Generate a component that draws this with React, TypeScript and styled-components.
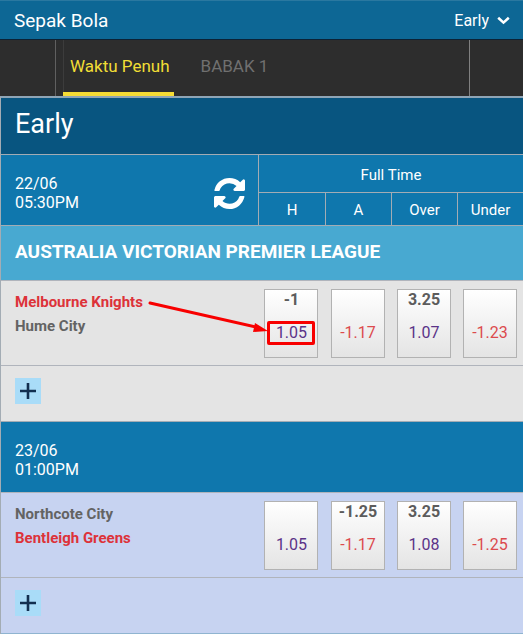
import React from "react";
import styled, { createGlobalStyle, css } from "styled-components";

const line = "#a3acb4";
const red = "#f80000";

const GlobalStyle = createGlobalStyle`
  *, *::before, *::after { box-sizing: border-box; }
  body {
    margin: 0;
    background: #c7d3f1;
    color: #ffffff;
    font-family: Roboto, "Liberation Sans", sans-serif;
    font-size: 16px;
  }
  button, select { font: inherit; color: inherit; }
`;

const TopBar = styled.header`
  display: flex;
  align-items: center;
  justify-content: space-between;
  height: 40px;
  padding: 0 13px 0 14px;
  background: #0d6795;
  border-top: 1px solid #2a78a0;
  border-bottom: 1px solid #0b2236;
`;

const SportTitle = styled.h1`
  margin: 0;
  font-size: 19px;
  font-weight: 400;
`;

const MarketPicker = styled.label`
  display: flex;
  align-items: center;
  gap: 8px;
`;

const MarketSelect = styled.select`
  appearance: none;
  field-sizing: content;
  padding: 0;
  border: 0;
  background: transparent;
  font-size: 16px;
`;

const TabStrip = styled.nav`
  display: flex;
  height: 56px;
  background: #2d2d2d;
`;

const TabEdge = styled.div<{ $side: "left" | "right" }>`
  flex: 0 0 auto;
  width: ${(p) => (p.$side === "left" ? 56 : 54)}px;
  ${(p) =>
    p.$side === "left"
      ? css`border-right: 1px solid #606060;`
      : css`border-left: 1px solid #808080;`}
`;

const TabList = styled.div`
  display: flex;
  flex: 1;
  gap: 20px;
  padding-left: 7px;
`;

const Tab = styled.button<{ $active?: boolean }>`
  padding: 0 4px 0 7px;
  border: 0;
  border-bottom: 4px solid ${(p) => (p.$active ? "#f5dc35" : "transparent")};
  background: transparent;
  box-shadow: ${(p) => (p.$active ? "inset 1px 0 #3c3c3c" : "none")};
  color: ${(p) => (p.$active ? "#f1de35" : "#707070")};
  font-size: 17px;
`;

const Board = styled.main`
  border-top: 2px solid #8fa5b6;
  border-left: 1px solid ${line};
`;

const Heading = styled.h2`
  display: flex;
  align-items: center;
  height: 56px;
  margin: 0;
  padding: 0 14px 4px;
  background: #085580;
  font-size: 27px;
  font-weight: 400;
`;

const OddsTable = styled.table`
  width: 100%;
  table-layout: fixed;
  border-collapse: separate;
  border-spacing: 0;
  text-align: center;
`;

const OddsCol = styled.col<{ $width: number }>`
  width: ${(p) => p.$width}px;
`;

const HeadCell = styled.th<{ $height: number }>`
  height: ${(p) => p.$height}px;
  padding: 2px 0 0;
  border-top: 1px solid ${line};
  border-left: 1px solid ${line};
  background: #0f77ad;
  font-size: 15px;
  font-weight: 400;
`;

const DateCell = styled.th`
  height: 71px;
  padding: 0 13px 0 14px;
  border-top: 1px solid ${line};
  background: #0f77ad;
  font-weight: 400;
  text-align: left;
`;

const DateRow = styled.div`
  display: flex;
  align-items: center;
  justify-content: space-between;
  padding-top: 6px;
`;

const Kickoff = styled.time`
  font-size: 16px;
  line-height: 19px;
  white-space: pre-line;
`;

const RefreshButton = styled.button`
  display: flex;
  padding: 0;
  border: 0;
  background: transparent;
`;

const LeagueCell = styled.th`
  height: 55px;
  padding: 0 14px 4px;
  border-top: 1px solid ${line};
  background: #48a9d1;
  font-size: 19px;
  font-weight: 700;
  text-align: left;
`;

const MatchBody = styled.tbody<{ $tint: string }>`
  background: ${(p) => p.$tint};
`;

const TeamsCell = styled.th`
  position: relative;
  height: 85px;
  padding: 9px 14px;
  border-top: 1px solid #b0b4bc;
  text-align: left;
  vertical-align: top;
`;

const Team = styled.div<{ $favourite: boolean }>`
  color: ${(p) => (p.$favourite ? "#dd3239" : "#636363")};
  font-size: 15px;
  font-weight: 700;
  line-height: 24px;
`;

const PriceCell = styled.td`
  height: 85px;
  padding: 8px 0 7px;
  border-top: 1px solid #b0b4bc;
  vertical-align: top;
`;

const PriceButton = styled.button`
  display: flex;
  flex-direction: column;
  align-items: center;
  justify-content: space-between;
  width: 54px;
  height: 69px;
  margin: 0 auto;
  padding: 1px 0 12px;
  border: 1px solid #b2b2b2;
  background: linear-gradient(#ffffff, #e4e4e4);
`;

const Handicap = styled.span`
  height: 18px;
  color: #5c5c5c;
  font-weight: 700;
  line-height: 18px;
`;

const Price = styled.span<{ $negative: boolean; $marked?: boolean }>`
  width: 48px;
  border: 3px solid ${(p) => (p.$marked ? red : "transparent")};
  border-radius: 2px;
  color: ${(p) => (p.$negative ? "#dc4a4d" : "#5b3388")};
  line-height: 18px;
`;

const MoreCell = styled.td`
  height: 56px;
  padding: 0 14px;
  border-top: 1px solid #b0b4bc;
`;

const MoreButton = styled.button`
  display: flex;
  align-items: center;
  justify-content: center;
  width: 26px;
  height: 26px;
  padding: 0;
  margin-top: -6px;
  border: 0;
  background: #a9dcf8;
`;

const Pointer = styled.svg`
  position: absolute;
  top: 16px;
  right: -10px;
  overflow: visible;
  pointer-events: none;
`;

const BottomLine = styled.div`
  height: 2px;
  background: #8fb4d0;
`;

type Odd = { handicap?: string; price: string; marked?: boolean };
type Match = { teams: [string, string]; favourite: number; odds: Odd[]; tint: string };

const knights: Match = {
  teams: ["Melbourne Knights", "Hume City"],
  favourite: 0,
  tint: "#e4e4e4",
  odds: [
    { handicap: "-1", price: "1.05", marked: true },
    { price: "-1.17" },
    { handicap: "3.25", price: "1.07" },
    { price: "-1.23" },
  ],
};

const northcote: Match = {
  teams: ["Northcote City", "Bentleigh Greens"],
  favourite: 1,
  tint: "#c7d3f1",
  odds: [
    { price: "1.05" },
    { handicap: "-1.25", price: "-1.17" },
    { handicap: "3.25", price: "1.08" },
    { price: "-1.25" },
  ],
};

const ChevronIcon = () => (
  <svg width="13" height="9" viewBox="0 0 13 9" fill="none" aria-hidden="true">
    <path d="M1.2 1.8 6.5 6.6l5.3-4.800" stroke="#fff" strokeWidth="2.6" />
  </svg>
);

const RefreshIcon = () => (
  <svg width="31" height="31" viewBox="0 0 1536 1536" fill="#fff" aria-hidden="true">
    <path d="M1511 928q0 5-1 7-64 268-268 434.500T764 1536q-146 0-282.500-55T238 1324l-129 129q-19 19-45 19t-45-19-19-45V960q0-26 19-45t45-19h448q26 0 45 19t19 45-19 45l-137 137q71 66 161 102t187 36q134 0 250-65t186-179q11-17 53-117 8-23 30-23h192q13 0 22.500 9.500t9.500 22.500zm25-800v448q0 26-19 45t-45 19h-448q-26 0-45-19t-19-45 19-45l138-138Q969 256 768 256q-134 0-250 65T332 500q-11 17-53 117-8 23-30 23H50q-13 0-22.500-9.500T18 608v-7q65-268 270-434.500T768 0q146 0 284 55.500T1297 212l130-129q19-19 45-19t45 19 19 45z" />
  </svg>
);

const PlusIcon = () => (
  <svg width="18" height="18" viewBox="0 0 18 18" aria-hidden="true">
    <path d="M9 1v16M1 9h16" stroke="#122f50" strokeWidth="2.6" />
  </svg>
);

const Arrow = () => (
  <Pointer width="120" height="36" viewBox="0 0 120 36" aria-hidden="true">
    <path d="M2 6 108 30" stroke={red} strokeWidth="3" strokeLinecap="round" />
    <path d="M107 26 120 34 105 35z" fill={red} />
  </Pointer>
);

const MatchRows = ({ match }: { match: Match }) => (
  <MatchBody $tint={match.tint}>
    <tr>
      <TeamsCell scope="row">
        {match.teams.map((team, i) => (
          <Team key={team} $favourite={i === match.favourite}>{team}</Team>
        ))}
        {match.odds.some((odd) => odd.marked) && <Arrow />}
      </TeamsCell>
      {match.odds.map((odd, i) => (
        <PriceCell key={i}>
          <PriceButton type="button">
            <Handicap>{odd.handicap}</Handicap>
            <Price $negative={odd.price.startsWith("-")} $marked={odd.marked}>{odd.price}</Price>
          </PriceButton>
        </PriceCell>
      ))}
    </tr>
    <tr>
      <MoreCell colSpan={5}>
        <MoreButton type="button" aria-label="More"><PlusIcon /></MoreButton>
      </MoreCell>
    </tr>
  </MatchBody>
);

export default function App() {
  return (
    <>
      <GlobalStyle />
      <TopBar>
        <SportTitle>Sepak Bola</SportTitle>
        <MarketPicker>
          <MarketSelect aria-label="Market">
            <option>Early</option>
          </MarketSelect>
          <ChevronIcon />
        </MarketPicker>
      </TopBar>
      <TabStrip>
        <TabEdge $side="left" />
        <TabList>
          <Tab type="button" $active>Waktu Penuh</Tab>
          <Tab type="button">BABAK 1</Tab>
        </TabList>
        <TabEdge $side="right" />
      </TabStrip>
      <Board>
        <Heading>Early</Heading>
        <OddsTable>
          <colgroup>
            <col />
            <OddsCol $width={67} />
            <OddsCol $width={66} />
            <OddsCol $width={66} />
            <OddsCol $width={66} />
          </colgroup>
          <thead>
            <tr>
              <DateCell rowSpan={2}>
                <DateRow>
                  <Kickoff>{"22/06\n05:30PM"}</Kickoff>
                  <RefreshButton type="button" aria-label="Refresh"><RefreshIcon /></RefreshButton>
                </DateRow>
              </DateCell>
              <HeadCell colSpan={4} $height={38}>Full Time</HeadCell>
            </tr>
            <tr>
              {["H", "A", "Over", "Under"].map((name) => (
                <HeadCell key={name} scope="col" $height={33}>{name}</HeadCell>
              ))}
            </tr>
            <tr>
              <LeagueCell colSpan={5}>AUSTRALIA VICTORIAN PREMIER LEAGUE</LeagueCell>
            </tr>
          </thead>
          <MatchRows match={knights} />
          <tbody>
            <tr>
              <DateCell colSpan={5}>
                <DateRow>
                  <Kickoff>{"23/06\n01:00PM"}</Kickoff>
                </DateRow>
              </DateCell>
            </tr>
          </tbody>
          <MatchRows match={northcote} />
        </OddsTable>
        <BottomLine />
      </Board>
    </>
  );
}
